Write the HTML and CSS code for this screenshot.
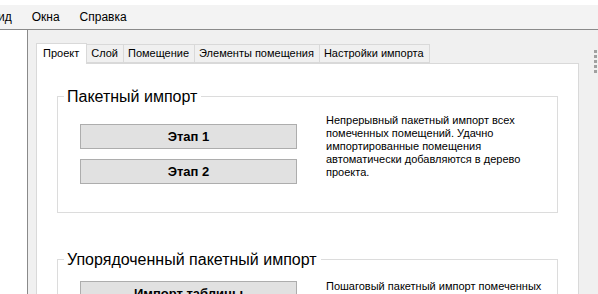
FILE: index.html
```html
<!DOCTYPE html>
<html lang="ru">
<head>
    <meta charset="UTF-8">
    <title>Импорт</title>
    <link rel="stylesheet" href="styles.css">
</head>
<body>
    <div class="menubar">
        <span class="menu-item cut">ид</span>
        <span class="menu-item">Окна</span>
        <span class="menu-item">Справка</span>
    </div>

    <div class="main">
        <div class="sidebar"></div>

        <div class="content">
            <div class="tabs">
                <div class="tab active">Проект</div>
                <div class="tab">Слой</div>
                <div class="tab">Помещение</div>
                <div class="tab">Элементы помещения</div>
                <div class="tab">Настройки импорта</div>
            </div>

            <div class="tab-page">
                <fieldset class="group">
                    <legend>Пакетный импорт</legend>
                    <div class="group-body">
                        <div class="buttons">
                            <button>Этап 1</button>
                            <button>Этап 2</button>
                        </div>
                        <p class="desc">Непрерывный пакетный импорт всех помеченных помещений. Удачно импортированные помещения автоматически добавляются в дерево проекта.</p>
                    </div>
                </fieldset>

                <fieldset class="group">
                    <legend>Упорядоченный пакетный импорт</legend>
                    <div class="group-body compact">
                        <div class="buttons">
                            <button>Импорт таблицы</button>
                        </div>
                        <p class="desc">Пошаговый пакетный импорт помеченных помещений. Помещения импортируются по очереди.</p>
                    </div>
                </fieldset>
            </div>
        </div>

        <div class="grip">
            <span></span><span></span><span></span><span></span><span></span>
        </div>
    </div>
</body>
</html>
```

FILE: styles.css
```css
:root {
    --panel: #f0f0f0;
    --tab-border: #d9d9d9;
    --group-border: #dcdcdc;
    --text: #000000;
}

* {
    margin: 0;
    padding: 0;
    box-sizing: border-box;
}

body {
    width: 598px;
    height: 294px;
    overflow: hidden;
    font-family: 'Liberation Sans', Arial, sans-serif;
    font-size: 11px;
    color: var(--text);
    background-color: var(--panel);
}

.menubar {
    height: 30px;
    display: flex;
    align-items: center;
    border-top: 5px solid #ffffff;
    background-color: #f3f3f3;
    border-bottom: 1px solid #8a8a8a;
    font-size: 12px;
}

.menu-item {
    margin-right: 20px;
    line-height: 16px;
}

.menu-item.cut {
    margin-left: -2px;
}

.main {
    display: flex;
    height: 264px;
}

.sidebar {
    width: 28px;
    background-color: #ffffff;
    border-right: 1px solid #8a8a8a;
}

.content {
    width: 551px;
    padding: 13px 0 0 8px;
}

.tabs {
    display: flex;
    align-items: flex-end;
    height: 20px;
    position: relative;
    z-index: 1;
}

.tab {
    height: 19px;
    padding: 0 5px 0 4px;
    line-height: 17px;
    border: 1px solid var(--tab-border);
    border-left: none;
    background-color: var(--panel);
    white-space: nowrap;
}

.tab.active {
    height: 21px;
    padding: 0 7px 0 6px;
    margin-bottom: -1px;
    border-left: 1px solid var(--tab-border);
    border-bottom: none;
    background-color: #ffffff;
    line-height: 19px;
}

.tab-page {
    height: 240px;
    border: 1px solid var(--tab-border);
    background-color: #ffffff;
    padding: 23px 20px 0 20px;
}

.group {
    border: 1px solid var(--group-border);
    margin-bottom: 37px;
}

.group legend {
    margin-left: 6px;
    padding: 0 4px 0 3px;
    font-size: 16px;
    line-height: 19px;
}

.group-body {
    display: flex;
    padding: 6px 0 0 22px;
}

.buttons {
    display: flex;
    flex-direction: column;
    gap: 10px;
    width: 217px;
    padding: 12px 0 28px 0;
}

.compact .buttons {
    padding-top: 6px;
}

.buttons button {
    height: 25px;
    background-color: #e1e1e1;
    border: 1px solid #adadad;
    font-family: inherit;
    font-size: 13px;
    font-weight: bold;
    color: var(--text);
}

.desc {
    width: 224px;
    margin-left: 29px;
    padding-top: 2px;
    line-height: 13px;
    font-size: 11px;
}

.compact .desc {
    padding-top: 5px;
}

.grip {
    flex: 1;
    display: flex;
    flex-direction: column;
    align-items: flex-end;
    gap: 2px;
    padding: 20px 1px 0 0;
}

.grip span {
    width: 3px;
    height: 3px;
    background-color: #a0a0a0;
}
```
